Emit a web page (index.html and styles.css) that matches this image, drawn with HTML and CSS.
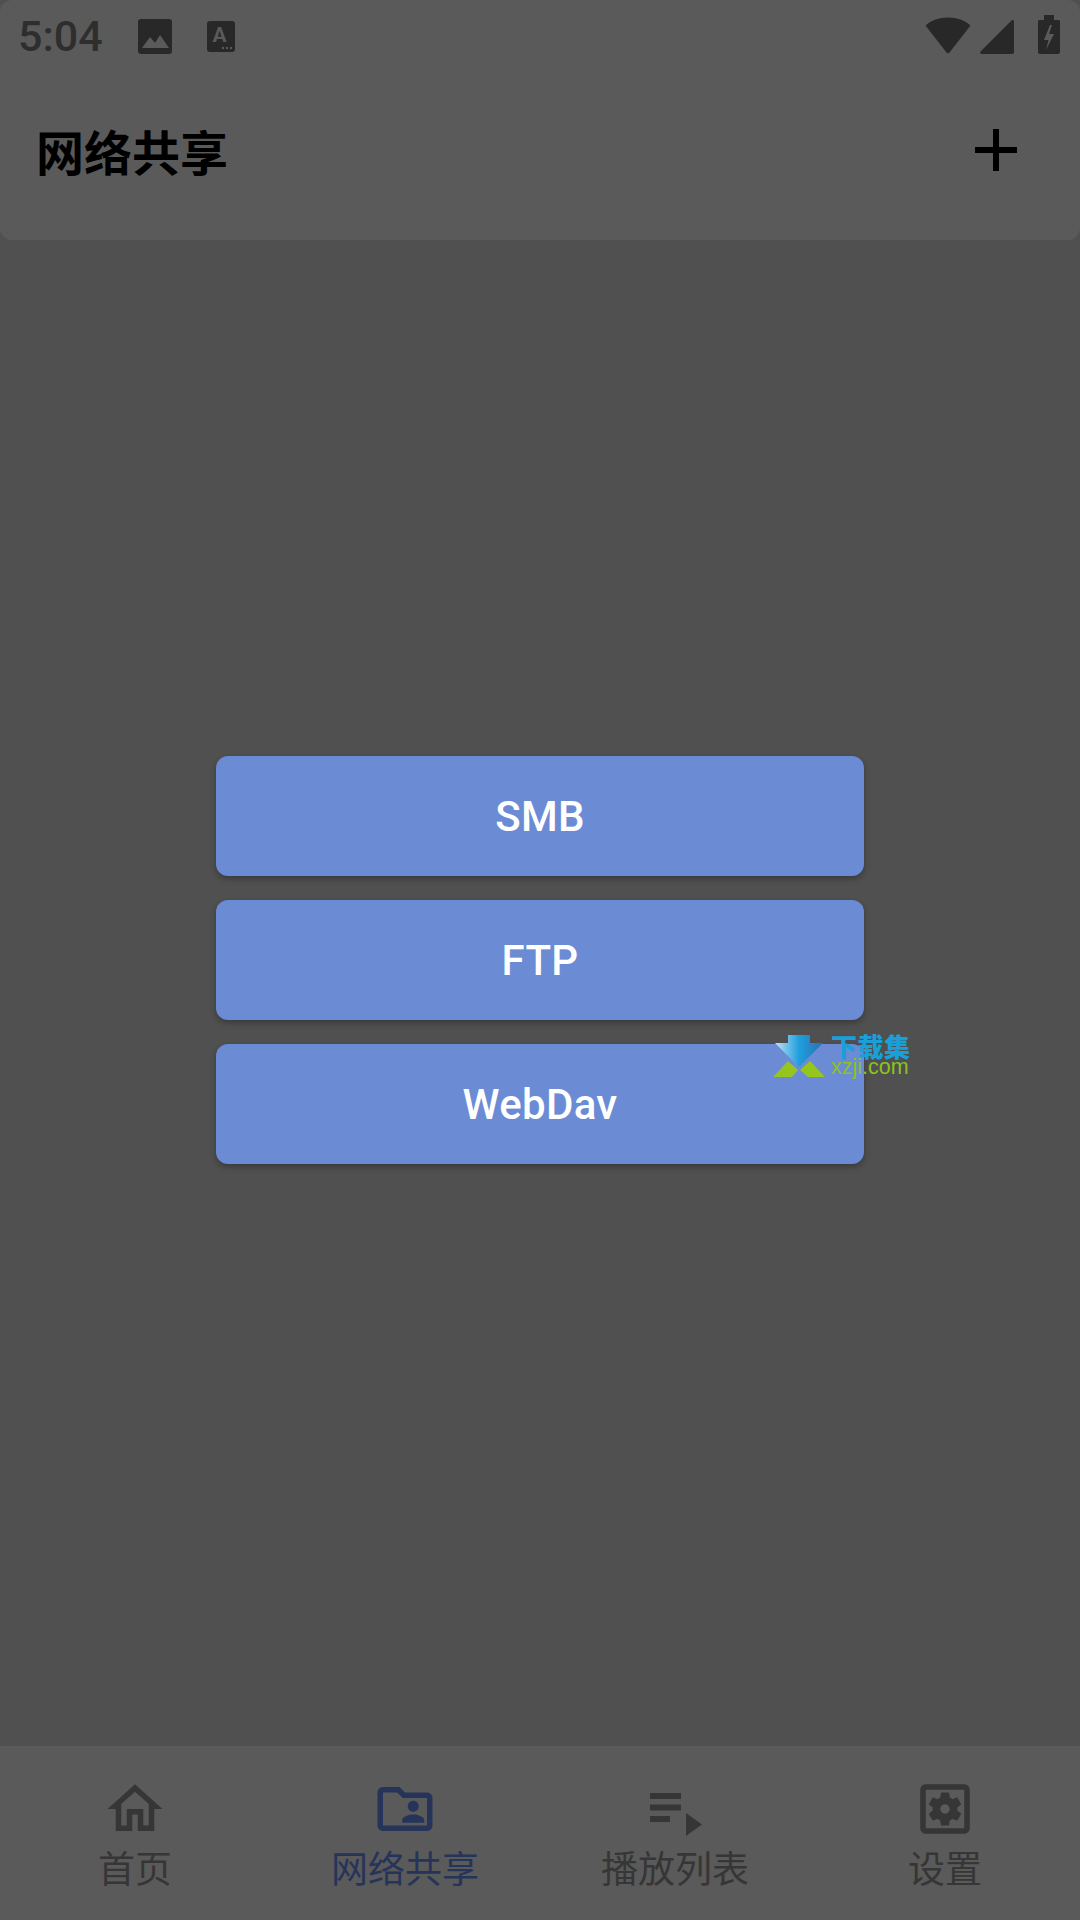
FILE: index.html
```html
<!DOCTYPE html>
<html lang="zh-CN">

    <head>
        <!-- Meta Data -->
        <meta charset="UTF-8">

        <!-- Title -->
        <title>网络共享</title>

        <!-- Style -->
        <link rel="stylesheet" href="styles.css">
    </head>

    <body>
        <!-- Top bar -->
        <header class="top-bar">
            <div class="status-bar">
                <div class="status-left">
                    <span class="clock">5:04</span>
                    <svg class="icon-image" width="34" height="35" viewBox="0 0 34 35">
                        <rect width="34" height="35" rx="3" fill="#282828"/>
                        <path d="M4 29L12 18l5 6 5-8 9 13z" fill="#5a5a5a"/>
                    </svg>
                    <svg class="icon-font" width="28" height="31" viewBox="0 0 28 31">
                        <rect width="28" height="31" rx="3" fill="#282828"/>
                        <text x="12.5" y="21" text-anchor="middle" class="icon-font-letter">A</text>
                        <circle cx="16" cy="27" r="1.2" fill="#5a5a5a"/>
                        <circle cx="20" cy="27" r="1.2" fill="#5a5a5a"/>
                        <circle cx="24" cy="27" r="1.2" fill="#5a5a5a"/>
                    </svg>
                </div>
                <div class="status-right">
                    <svg class="icon-wifi" width="46" height="37" viewBox="0 0 46 37">
                        <path d="M.5 8.500C6 3.300 14 .5 23 .5s17 2.800 22.500 8L24.500 35.500c-.8 1-2.200 1-3 0z" fill="#282828"/>
                    </svg>
                    <svg class="icon-signal" width="34" height="34" viewBox="0 0 34 34">
                        <path d="M31.500.5c1.200-.9 2.500-.2 2.500 1.200V32c0 1.200-.8 2-2 2H2c-1.800 0-2.400-1.500-1.200-2.700z" fill="#282828"/>
                    </svg>
                    <svg class="icon-battery" width="22" height="39" viewBox="0 0 22 39">
                        <path d="M6 0h10v5h4.500c.9 0 1.500.6 1.500 1.500V37c0 1.200-.8 2-2 2H2c-1.200 0-2-.8-2-2V6.500C0 5.600.6 5 1.500 5H6z" fill="#282828"/>
                        <path d="M12 10l-6 15h4.500L8 35l8-16h-5l3-9z" fill="#5a5a5a"/>
                    </svg>
                </div>
            </div>
            <div class="title-row">
                <h1 class="title">网络共享</h1>
                <svg class="add-icon" width="42" height="42" viewBox="0 0 42 42">
                    <path d="M18 0h6v18h18v6H24v18h-6V24H0v-6h18z" fill="#000"/>
                </svg>
            </div>
        </header>

        <!-- Share types -->
        <main class="content">
            <button class="share-btn">SMB</button>
            <button class="share-btn">FTP</button>
            <button class="share-btn">WebDav</button>
        </main>

        <!-- Bottom navigation -->
        <nav class="bottom-nav">
            <div class="nav-item">
                <svg class="nav-icon" viewBox="0 0 24 24">
                    <path d="M12 5.690l5 4.500V18h-2v-6H9v6H7v-7.810l5-4.500M12 3L2 12h3v8h6v-6h2v6h6v-8h3L12 3z"/>
                </svg>
                <span>首页</span>
            </div>
            <div class="nav-item active">
                <svg class="nav-icon" viewBox="0 0 24 24">
                    <path d="M20 6h-8l-2-2H4c-1.100 0-1.990.9-1.990 2L2 18c0 1.100.9 2 2 2h16c1.100 0 2-.9 2-2V8c0-1.100-.9-2-2-2zm0 12H4V6h5.170l2 2H20v10zm-5-5c1.100 0 2-.9 2-2s-.9-2-2-2-2 .9-2 2 .9 2 2 2zm-4 4h8v-1c0-1.330-2.670-2-4-2s-4 .67-4 2v1z"/>
                </svg>
                <span>网络共享</span>
            </div>
            <div class="nav-item">
                <svg class="nav-icon" viewBox="0 0 66 66">
                    <path d="M8 17h31v6H8zm0 11.500h31v6H8zM8 40h20v6H8zm36-3l16 11.500L44 60z"/>
                </svg>
                <span>播放列表</span>
            </div>
            <div class="nav-item">
                <svg class="nav-icon" viewBox="0 0 24 24">
                    <path d="M6.210 13.970l1.200 2.070c.08.13.23.18.37.13l1.490-.6c.31.24.64.44 1.010.59l.22 1.590c.03.14.15.25.3.25h2.400c.15 0 .27-.11.3-.25l.22-1.590c.36-.15.7-.35 1.010-.59l1.490.6c.14.05.29 0 .37-.13l1.200-2.070c.08-.13.04-.29-.07-.39l-1.270-.99c.03-.19.04-.39.04-.58 0-.2-.02-.39-.04-.58l1.270-.99c.11-.09.15-.26.07-.39l-1.200-2.070c-.08-.13-.23-.18-.37-.13l-1.490.6c-.31-.24-.64-.44-1.010-.59l-.22-1.590c-.03-.14-.15-.25-.3-.25h-2.400c-.15 0-.27.11-.3.25l-.22 1.590c-.36.15-.71.34-1.010.59l-1.490-.6c-.14-.05-.29 0-.37.13l-1.200 2.070c-.08.13-.04.29.07.39l1.270.99c-.03.19-.05.39-.05.58 0 .2.02.39.05.58l-1.270.99c-.11.1-.15.26-.07.39zM12 10.290c.94 0 1.710.77 1.710 1.710s-.77 1.710-1.710 1.710-1.710-.77-1.710-1.710.77-1.710 1.710-1.710zM19 3H5c-1.110 0-2 .9-2 2v14c0 1.100.89 2 2 2h14c1.100 0 2-.9 2-2V5c0-1.100-.9-2-2-2zm0 16H5V5h14v14z"/>
                </svg>
                <span>设置</span>
            </div>
        </nav>

        <!-- Watermark -->
        <div class="watermark">
            <svg width="54" height="44" viewBox="0 0 54 44">
                <defs>
                    <linearGradient id="arrow-fill" x1="0" y1="0" x2="1" y2="0">
                        <stop offset="0" stop-color="#bfe3f2"/>
                        <stop offset="0.5" stop-color="#1f9fdd"/>
                        <stop offset="1" stop-color="#2a6fb5"/>
                    </linearGradient>
                </defs>
                <path d="M16 1h22v8h13L27 33 3 9h13z" fill="url(#arrow-fill)"/>
                <path d="M16 27l10 9-6 7H1zm22 0l-10 9 8 7h17z" fill="#95c61e"/>
            </svg>
            <div class="watermark-text">
                <span class="watermark-name">下载集</span>
                <span class="watermark-url">xzji.com</span>
            </div>
        </div>
    </body>

</html>
```

FILE: styles.css
```css
html {
    background-color: #505050;
}

body {
    position: relative;
    display: flex;
    flex-direction: column;
    width: 1080px;
    height: 1920px;
    margin: 0;
    overflow: hidden;
    font-family: "Noto Sans CJK SC", "Noto Sans", sans-serif;
}

.top-bar {
    height: 240px;
    border-radius: 12px;
    background-color: #5a5a5a;
}

.status-bar {
    display: flex;
    justify-content: space-between;
    align-items: center;
    height: 72px;
    padding: 0 20px 0 18px;
}

.status-left {
    display: flex;
    align-items: center;
}

.clock {
    width: 120px;
    font-family: Roboto, sans-serif;
    font-size: 43px;
    font-weight: 500;
    color: #2e2e2e;
}

.icon-image {
    margin-right: 35px;
}

.icon-font-letter {
    font-family: Roboto, sans-serif;
    font-size: 21px;
    font-weight: 700;
    fill: #5a5a5a;
}

.status-right {
    display: flex;
    align-items: flex-end;
    gap: 9px;
    margin-bottom: 3px;
}

.icon-battery {
    margin-left: 15px;
}

.title-row {
    display: flex;
    justify-content: space-between;
    align-items: center;
    padding: 0 63px 0 36px;
    height: 156px;
}

.title {
    margin: 0;
    font-size: 48px;
    font-weight: 700;
    color: #000;
}

.content {
    flex: 1;
    display: flex;
    flex-direction: column;
    justify-content: center;
    align-items: center;
    gap: 24px;
    padding-bottom: 66px;
}

.share-btn {
    width: 648px;
    height: 120px;
    border: none;
    border-radius: 12px;
    background-color: #6b8bd5;
    box-shadow: 0 3px 6px rgba(0, 0, 0, 0.28);
    font-family: Roboto, sans-serif;
    font-size: 42px;
    font-weight: 500;
    letter-spacing: 0.3px;
    color: #fff;
}

.bottom-nav {
    display: grid;
    grid-template-columns: repeat(4, 1fr);
    height: 174px;
    background-color: #5a5a5a;
}

.nav-item {
    display: flex;
    flex-direction: column;
    align-items: center;
    padding-top: 30px;
    font-size: 37px;
    line-height: 48px;
    color: #363636;
}

.nav-item.active {
    color: #26345a;
}

.nav-icon {
    width: 66px;
    height: 66px;
    margin-bottom: 1px;
    fill: currentColor;
}

.watermark {
    position: absolute;
    left: 772px;
    top: 1034px;
    display: flex;
    gap: 5px;
}

.watermark-text {
    display: flex;
    flex-direction: column;
}

.watermark-name {
    font-size: 26px;
    font-weight: 900;
    line-height: 24px;
    letter-spacing: 0.5px;
    color: #1b9fd8;
}

.watermark-url {
    font-family: "Liberation Sans", sans-serif;
    font-size: 21.5px;
    line-height: 18px;
    color: #8dc21f;
}
```
